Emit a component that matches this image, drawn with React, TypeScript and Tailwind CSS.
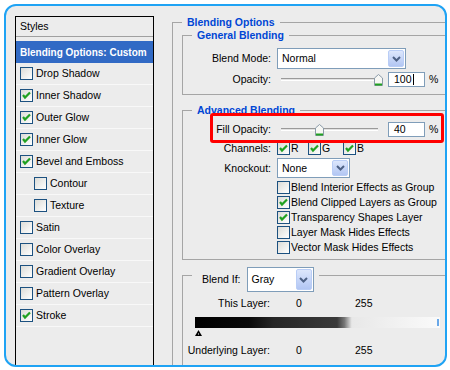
import type { ReactNode } from 'react'

const styles = [
  { name: 'Drop Shadow' },
  { name: 'Inner Shadow', on: true },
  { name: 'Outer Glow', on: true },
  { name: 'Inner Glow', on: true },
  { name: 'Bevel and Emboss', on: true },
  { name: 'Contour', sub: true },
  { name: 'Texture', sub: true },
  { name: 'Satin' },
  { name: 'Color Overlay' },
  { name: 'Gradient Overlay' },
  { name: 'Pattern Overlay' },
  { name: 'Stroke', on: true },
]

const advanced = [
  { name: 'Blend Interior Effects as Group' },
  { name: 'Blend Clipped Layers as Group', on: true },
  { name: 'Transparency Shapes Layer', on: true },
  { name: 'Layer Mask Hides Effects' },
  { name: 'Vector Mask Hides Effects' },
]

function Check({ on }: { on?: boolean }) {
  return (
    <span className="flex h-[13px] w-[13px] shrink-0 items-center justify-center border border-[#1c5180] bg-linear-to-br from-[#dcdcd7] to-white">
      {on && (
        <svg width="11" height="11" viewBox="0 0 11 11">
          <path d="M2 5 L4 7.5 L9 2.5" fill="none" stroke="#21a121" strokeWidth="2.2" />
        </svg>
      )}
    </span>
  )
}

function Combo({ value, box }: { value: string; box: string }) {
  return (
    <div className={`flex shrink-0 items-stretch border border-[#7f9db9] bg-white p-[1px] ${box}`}>
      <span className="flex flex-1 items-center pl-[3px]">{value}</span>
      <span className="flex w-[16px] items-center justify-center rounded-[2px] border border-[#b9cdf6] bg-linear-to-b from-[#dde7fc] to-[#b2c6f3]">
        <svg width="9" height="6" viewBox="0 0 9 6">
          <path d="M1 1 L4.5 4.5 L8 1" fill="none" stroke="#4d6185" strokeWidth="2" />
        </svg>
      </span>
    </div>
  )
}

function Slider({ pct }: { pct: number }) {
  return (
    <div className="relative h-[15px] w-[111px] shrink-0">
      <div className="absolute left-[4px] right-[10px] top-[6px] h-[3px] border-t border-b border-t-[#9a9a9a] border-b-white bg-[#e2e2e2]" />
      {/* thumb */}
      <svg
        className="absolute top-[2px]"
        style={{ left: 4 + (pct * 97) / 100 - 4.5 }}
        width="9"
        height="12"
        viewBox="0 0 9 12"
      >
        <path d="M0.5 11.5 V4 L4.5 0.5 L8.5 4 V11.5 Z" fill="#f7f7f4" stroke="#8a9aa8" />
        <path d="M1 10.5 H8" stroke="#21a121" strokeWidth="2" />
      </svg>
    </div>
  )
}

function NumBox({ value, caret }: { value: string; caret?: boolean }) {
  return (
    <div className="flex h-[15px] w-[37px] shrink-0 items-center border border-[#7f9db9] bg-white pl-[5px]">
      {value}
      {caret && <span className="ml-[1px] h-[11px] w-px bg-black" />}
    </div>
  )
}

function Row({ label, children, className }: { label: string; children: ReactNode; className: string }) {
  return (
    <div className={`flex items-center ${className}`}>
      <span className="mr-[6px] w-[88px] shrink-0 text-right">{label}</span>
      {children}
    </div>
  )
}

function StylesList() {
  return (
    <div className="h-[360px] w-[139px] shrink-0 border border-black">
      <div className="flex h-[20px] items-center border-b border-[#a0a0a0] pl-[4px]">Styles</div>
      <div className="mt-[4px] flex h-[22px] items-center whitespace-nowrap bg-[#316ac5] pl-[4px] text-[10px] font-bold text-white">
        Blending Options: Custom
      </div>
      {styles.map((s) => (
        <div
          key={s.name}
          className={`flex h-[22px] items-center gap-[3px] border-b border-[#f8f8f8] ${s.sub ? 'pl-[18px]' : 'pl-[4px]'}`}
        >
          <Check on={s.on} />
          {s.name}
        </div>
      ))}
    </div>
  )
}

export default function App() {
  return (
    <div className="h-[370px] w-[450px] bg-white pl-[4px] pt-[4px] font-['Liberation_Sans',Arial,sans-serif] text-[10.5px] leading-[13px] text-black">
      <div className="relative flex h-[363px] w-[443px] items-start gap-[18px] overflow-hidden rounded-[12px] border-2 border-[#1fa3f4] bg-[#ececec] pl-[9px] pt-[10px]">
        <StylesList />

        <fieldset className="w-[300px] shrink-0 border border-[#a5a5a5] pb-[40px]">
          <legend className="ml-[9px] px-[5px] font-bold text-[#0046d5]">Blending Options</legend>

          <fieldset className="ml-[9px] border border-[#a5a5a5] pb-[7px] pt-[6px]">
            <legend className="ml-[9px] px-[5px] font-bold text-[#0046d5]">General Blending</legend>
            <Row label="Blend Mode:" className="h-[21px]">
              <Combo value="Normal" box="h-[21px] w-[129px]" />
            </Row>
            <Row label="Opacity:" className="mt-[3px] h-[15px]">
              <Slider pct={100} />
              <NumBox value="100" caret />
              <span className="ml-[4px]">%</span>
            </Row>
          </fieldset>

          <fieldset className="ml-[9px] mt-[9px] border border-[#a5a5a5] pb-[4px] pt-[5px]">
            <legend className="ml-[9px] px-[5px] font-bold text-[#0046d5]">Advanced Blending</legend>
            <Row label="Fill Opacity:" className="h-[15px]">
              <Slider pct={40} />
              <NumBox value="40" />
              <span className="ml-[4px]">%</span>
            </Row>
            <Row label="Channels:" className="mt-[4px] h-[15px]">
              <span className="flex w-[31px] items-center gap-[1px]">
                <Check on />R
              </span>
              <span className="flex w-[35px] items-center gap-[1px]">
                <Check on />G
              </span>
              <span className="flex items-center gap-[1px]">
                <Check on />B
              </span>
            </Row>
            <Row label="Knockout:" className="mt-[2px] h-[20px]">
              <Combo value="None" box="h-[20px] w-[73px]" />
            </Row>
            <div className="mt-[2px] pl-[94px]">
              {advanced.map((a) => (
                <div key={a.name} className="flex h-[15px] items-center gap-[1px]">
                  <Check on={a.on} />
                  {a.name}
                </div>
              ))}
            </div>
          </fieldset>

          <fieldset className="ml-[9px] mt-[7px] border border-[#a5a5a5] pb-[20px]">
            <legend className="ml-[9px] h-[16px] pl-[10px] pr-[5px]">
              <div className="flex h-[25px] items-center gap-[6px]">
                <span>Blend If:</span>
                <Combo value="Gray" box="h-[25px] w-[67px]" />
              </div>
            </legend>
            <div className="mt-[14px] flex h-[13px] items-center">
              <span className="w-[87px] text-right">This Layer:</span>
              <span className="ml-[26px] w-[59px]">0</span>
              <span>255</span>
            </div>
            <div className="ml-[12px] mt-[7px] flex h-[11px] w-[245px] items-center justify-end bg-[linear-gradient(to_right,#000_0%,#0a0a0a_22%,#262626_32%,#3a3a3a_58%,#777_61%,#e8e8e8_64%,#fafafa_100%)] pr-[1px]">
              <span className="h-[7px] w-[2px] bg-[#6aa8e8]" />
            </div>
            <div className="ml-[12px] mt-[2px] h-[6px]">
              <svg width="7" height="6" viewBox="0 0 7 6">
                <path d="M3.5 0 L7 6 H0 Z" fill="#000" />
                <path d="M3 3.5 H4 V4.5 H3 Z" fill="#fff" />
              </svg>
            </div>
            <div className="mt-[8px] flex h-[13px] items-center">
              <span className="w-[87px] text-right">Underlying Layer:</span>
              <span className="ml-[26px] w-[59px]">0</span>
              <span>255</span>
            </div>
          </fieldset>
        </fieldset>

        {/* red highlight drawn over the fill opacity row */}
        <div className="absolute left-[204px] top-[107px] h-[30px] w-[234px] rounded-[3px] border-[3px] border-[#ff0000]" />
      </div>
    </div>
  )
}
